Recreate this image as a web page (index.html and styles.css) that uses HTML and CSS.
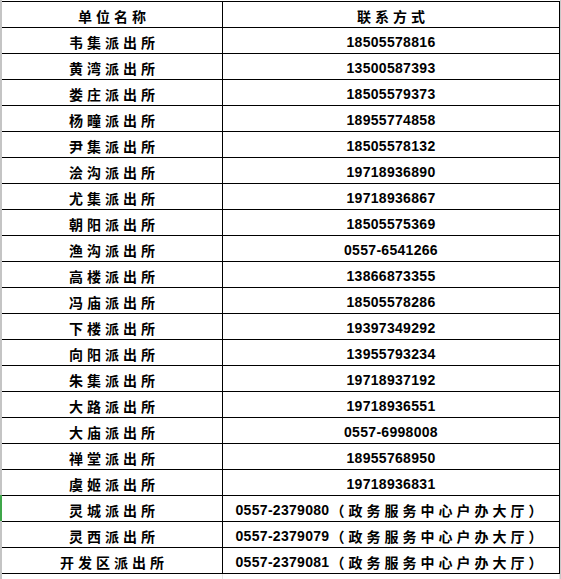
FILE: index.html
```html
<!DOCTYPE html>
<html lang="zh-CN">
<head>
<meta charset="utf-8">
<title>派出所联系方式</title>
<link rel="stylesheet" href="styles.css">
</head>
<body>
<div class="sheet">
  <div class="gutter">
    <div class="gutter-fill top"></div>
    <div class="gutter-mark"></div>
    <div class="gutter-fill"></div>
  </div>
  <div class="main">
    <div class="table">
      <div class="row head"><div class="cell name">单位名称</div><div class="cell tel head-tel">联系方式</div></div>
      <div class="row"><div class="cell name">韦集派出所</div><div class="cell tel">18505578816</div></div>
      <div class="row"><div class="cell name">黄湾派出所</div><div class="cell tel">13500587393</div></div>
      <div class="row"><div class="cell name">娄庄派出所</div><div class="cell tel">18505579373</div></div>
      <div class="row"><div class="cell name">杨疃派出所</div><div class="cell tel">18955774858</div></div>
      <div class="row"><div class="cell name">尹集派出所</div><div class="cell tel">18505578132</div></div>
      <div class="row"><div class="cell name">浍沟派出所</div><div class="cell tel">19718936890</div></div>
      <div class="row"><div class="cell name">尤集派出所</div><div class="cell tel">19718936867</div></div>
      <div class="row"><div class="cell name">朝阳派出所</div><div class="cell tel">18505575369</div></div>
      <div class="row"><div class="cell name">渔沟派出所</div><div class="cell tel">0557-6541266</div></div>
      <div class="row"><div class="cell name">高楼派出所</div><div class="cell tel">13866873355</div></div>
      <div class="row"><div class="cell name">冯庙派出所</div><div class="cell tel">18505578286</div></div>
      <div class="row"><div class="cell name">下楼派出所</div><div class="cell tel">19397349292</div></div>
      <div class="row"><div class="cell name">向阳派出所</div><div class="cell tel">13955793234</div></div>
      <div class="row"><div class="cell name">朱集派出所</div><div class="cell tel">19718937192</div></div>
      <div class="row"><div class="cell name">大路派出所</div><div class="cell tel">19718936551</div></div>
      <div class="row"><div class="cell name">大庙派出所</div><div class="cell tel">0557-6998008</div></div>
      <div class="row"><div class="cell name">禅堂派出所</div><div class="cell tel">18955768950</div></div>
      <div class="row"><div class="cell name">虞姬派出所</div><div class="cell tel">19718936831</div></div>
      <div class="row"><div class="cell name">灵城派出所</div><div class="cell tel">0557-2379080<span class="note">（政务服务中心户办大厅）</span></div></div>
      <div class="row"><div class="cell name">灵西派出所</div><div class="cell tel">0557-2379079<span class="note">（政务服务中心户办大厅）</span></div></div>
      <div class="row"><div class="cell name">开发区派出所</div><div class="cell tel">0557-2379081<span class="note">（政务服务中心户办大厅）</span></div></div>
    </div>
    <div class="below"><div class="below-cell"></div><div class="below-cell"></div></div>
  </div>
</div>
</body>
</html>
```

FILE: styles.css
```css
html, body {
  margin: 0;
  padding: 0;
  background: #ffffff;
}

.sheet {
  width: 561px;
  height: 579px;
  display: flex;
  overflow: hidden;
}

.gutter {
  width: 2px;
  display: flex;
  flex-direction: column;
  flex: none;
}

.gutter-fill {
  background: #c4c4c4;
  flex: 1;
}

.gutter-fill.top {
  flex: none;
  height: 495px;
}

.gutter-mark {
  height: 26px;
  background: #3fa64a;
}

.main {
  width: 559px;
  display: flex;
  flex-direction: column;
  padding-top: 1px;
  border-right: 1px solid #c8c8c8;
  box-sizing: border-box;
}

.table {
  width: 558px;
  border-top: 1px solid #000;
}

.row {
  display: grid;
  grid-template-columns: 221px 337px;
  height: 26px;
  box-sizing: border-box;
  border-bottom: 1px solid #000;
}

.cell {
  display: flex;
  align-items: center;
  justify-content: center;
  padding-top: 2px;
  box-sizing: border-box;
  border-right: 1px solid #000;
  color: #000;
  font-weight: bold;
  white-space: nowrap;
}

.name {
  font-family: "Noto Sans CJK SC", "Noto Sans", sans-serif;
  font-size: 14px;
  letter-spacing: 4px;
  padding-left: 4px;
}

.tel {
  font-family: "Liberation Sans", "Noto Sans CJK SC", sans-serif;
  font-size: 14px;
  letter-spacing: 0.3px;
}

.tel.head-tel {
  font-family: "Noto Sans CJK SC", sans-serif;
  letter-spacing: 4px;
  padding-left: 4px;
}

.note {
  font-family: "Noto Sans CJK SC", sans-serif;
  letter-spacing: 4px;
  padding-left: 1px;
}

.below {
  flex: 1;
  display: grid;
  grid-template-columns: 221px 337px;
}

.below-cell {
  border-right: 1px solid #e2e2e2;
}
```
